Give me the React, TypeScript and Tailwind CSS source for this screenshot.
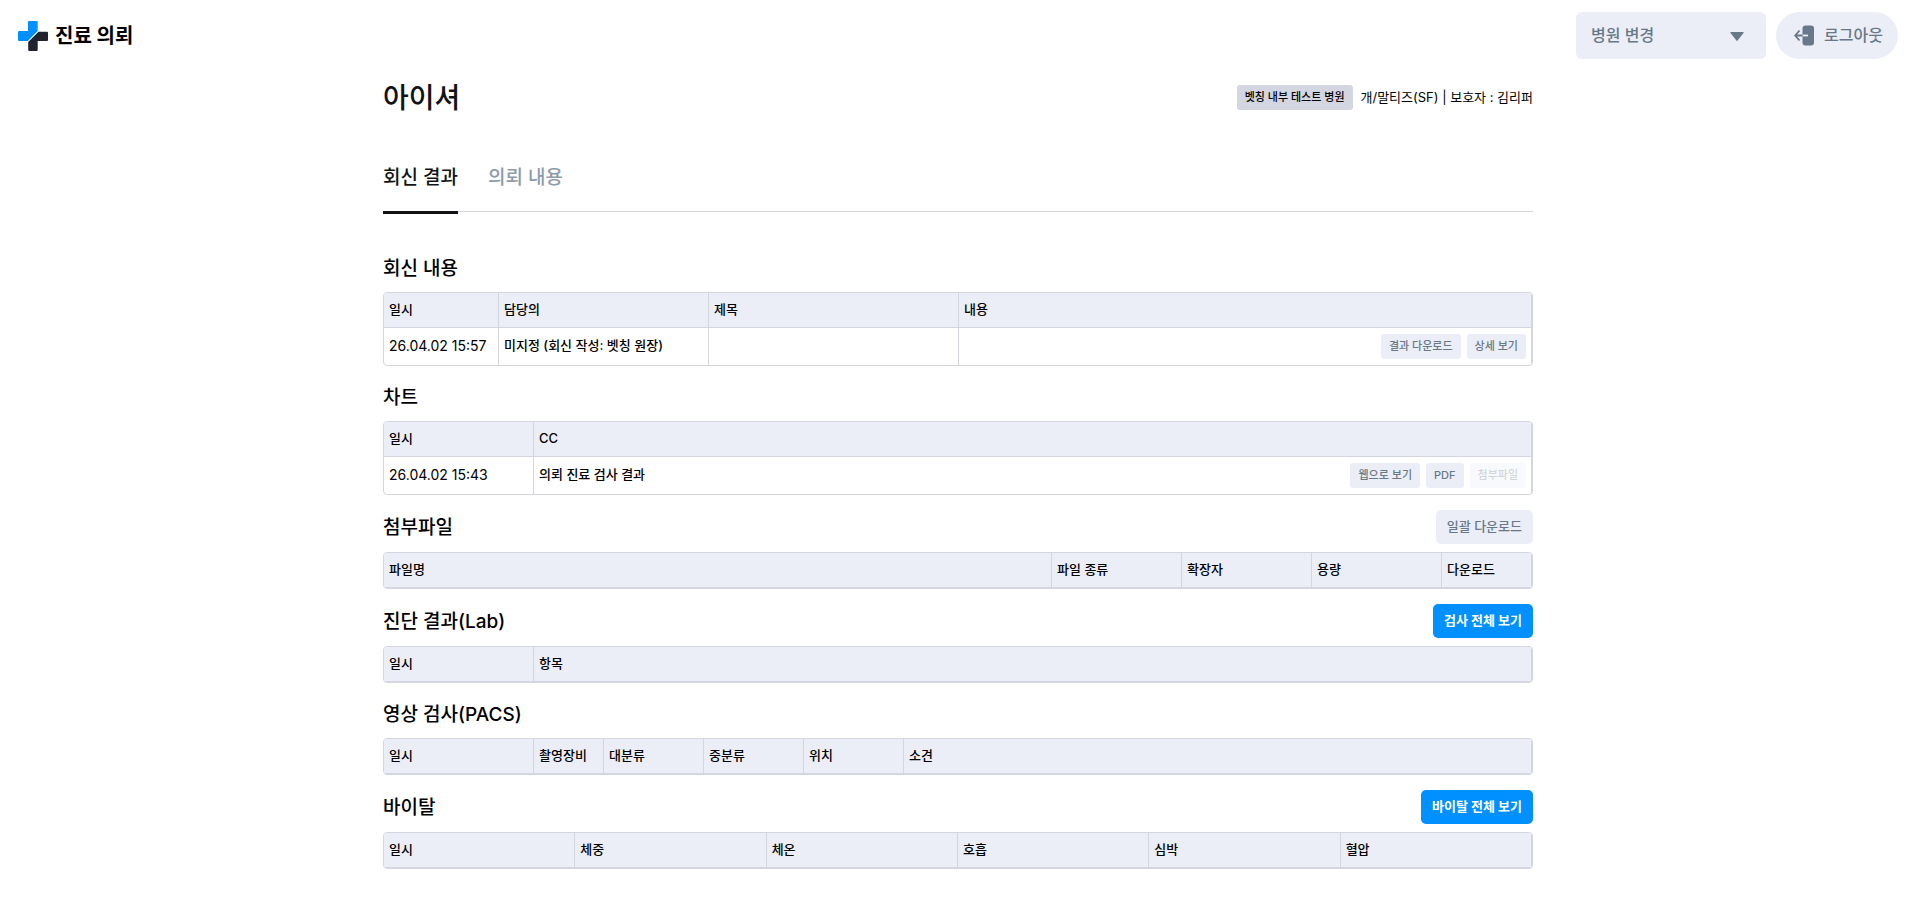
import type { ReactNode } from "react";
import clsx from "clsx";

interface Column {
  label: string;
  width?: string;
}

interface DataTableProps {
  label: string;
  columns: Column[];
  rows?: ReactNode[][];
}

interface SectionProps {
  title: string;
  action?: ReactNode;
  children: ReactNode;
}

const REPLY_COLUMNS: Column[] = [
  { label: "일시", width: "w-[115px]" },
  { label: "담당의", width: "w-[210px]" },
  { label: "제목", width: "w-[250px]" },
  { label: "내용" },
];

const CHART_COLUMNS: Column[] = [{ label: "일시", width: "w-[150px]" }, { label: "CC" }];

const FILE_COLUMNS: Column[] = [
  { label: "파일명" },
  { label: "파일 종류", width: "w-[130px]" },
  { label: "확장자", width: "w-[130px]" },
  { label: "용량", width: "w-[130px]" },
  { label: "다운로드", width: "w-[90px]" },
];

const LAB_COLUMNS: Column[] = [{ label: "일시", width: "w-[150px]" }, { label: "항목" }];

const PACS_COLUMNS: Column[] = [
  { label: "일시", width: "w-[150px]" },
  { label: "촬영장비", width: "w-[70px]" },
  { label: "대분류", width: "w-[100px]" },
  { label: "중분류", width: "w-[100px]" },
  { label: "위치", width: "w-[100px]" },
  { label: "소견" },
];

const VITAL_COLUMNS: Column[] = [
  { label: "일시" },
  { label: "체중" },
  { label: "체온" },
  { label: "호흡" },
  { label: "심박" },
  { label: "혈압" },
];

function Logo() {
  return (
    <svg viewBox="0 0 30 30" className="size-[30px]" aria-hidden="true">
      <path
        d="M11 0H18.700a1 1 0 0 1 1 1V10L9.700 20H1a1 1 0 0 1-1-1V11a1 1 0 0 1 1-1H10V1a1 1 0 0 1 1-1Z"
        fill="#0090ff"
      />
      <path
        d="M20.500 10.700H29a1 1 0 0 1 1 1V19a1 1 0 0 1-1 1H19.700V29a1 1 0 0 1-1 1H11.200a1 1 0 0 1-1-1V21Z"
        fill="#20232d"
      />
    </svg>
  );
}

function LogoutIcon() {
  return (
    <svg viewBox="0 0 20 21" className="h-[21px] w-5" aria-hidden="true">
      <rect x="8.500" y="0.500" width="11.500" height="20" rx="3" fill="#677889" />
      <path d="M5.500 5.500 1.200 10.500l4.300 5M1.500 10.500H9" fill="none" stroke="#677889" strokeWidth="1.800" />
      <path d="M8.500 10.500h5.500" stroke="#ebeef6" strokeWidth="1.800" />
    </svg>
  );
}

function SmallButton({ children, disabled }: { children: ReactNode; disabled?: boolean }) {
  return (
    <button
      type="button"
      disabled={disabled}
      className="h-[25px] rounded-[3px] bg-[#ebeef6] px-2 text-[11px] font-medium text-[#677889] disabled:opacity-30"
    >
      {children}
    </button>
  );
}

function ActionButton({ children, primary }: { children: ReactNode; primary?: boolean }) {
  return (
    <button
      type="button"
      className={clsx(
        "h-[34px] rounded-[5px] px-[11px] text-[13px]",
        primary ? "bg-[#0090ff] font-bold text-white" : "bg-[#ebeef6] font-medium text-[#677889]",
      )}
    >
      {children}
    </button>
  );
}

function CellText({ children }: { children: ReactNode }) {
  return <span className="block pb-0.5">{children}</span>;
}

function DataTable({ label, columns, rows = [] }: DataTableProps) {
  return (
    <div className="overflow-hidden rounded border border-[#d3d5e1]">
      <table aria-label={label} className="w-full table-fixed border-separate border-spacing-0 text-[13px] font-medium">
        <thead>
          <tr>
            {columns.map((column) => (
              <th
                key={column.label}
                scope="col"
                className={clsx(
                  "h-[35px] border-r border-b border-[#d3d5e1] bg-[#ebeef6] px-[5px] py-0 text-left font-medium",
                  column.width,
                )}
              >
                {column.label}
              </th>
            ))}
          </tr>
        </thead>
        {rows.length > 0 && (
          <tbody>
            {rows.map((cells, i) => (
              <tr key={i}>
                {cells.map((cell, j) => (
                  <td key={j} className="h-[37px] border-r border-[#d3d5e1] px-[5px] py-0">
                    {cell}
                  </td>
                ))}
              </tr>
            ))}
          </tbody>
        )}
      </table>
    </div>
  );
}

function Section({ title, action, children }: SectionProps) {
  return (
    <section className="flex flex-col gap-2">
      <div className="flex items-center justify-between">
        <h2 className="pt-0.5 text-[19px] leading-[30px] font-medium">{title}</h2>
        {action}
      </div>
      {children}
    </section>
  );
}

function AppHeader() {
  return (
    <header className="flex items-center justify-between py-3 pr-[19px] pl-[18px]">
      <a href="#" className="flex items-center gap-[7px] text-xl font-bold">
        <Logo />
        진료 의뢰
      </a>
      <div className="flex items-center gap-[10px] text-base font-medium text-[#677889]">
        <div className="relative">
          <select
            aria-label="병원 변경"
            className="h-[47px] w-[190px] appearance-none rounded-md bg-[#ebeef6] pr-10 pb-0.5 pl-[15px]"
          >
            <option>병원 변경</option>
          </select>
          <svg
            viewBox="0 0 14 9"
            className="pointer-events-none absolute top-5 right-[22px] h-[9px] w-[14px]"
            aria-hidden="true"
          >
            <path d="M1 0h12a.6.6 0 0 1 .5 1L7.600 8.600a.8.8 0 0 1-1.200 0L.5 1A.6.6 0 0 1 1 0Z" fill="#677889" />
          </svg>
        </div>
        <button type="button" className="flex h-[47px] w-[122px] items-center gap-[10px] rounded-full bg-[#ebeef6] pl-[18px]">
          <LogoutIcon />
          <span className="pb-0.5">로그아웃</span>
        </button>
      </div>
    </header>
  );
}

export default function App() {
  return (
    <div className="bg-white font-['Inter','Noto_Sans_CJK_KR',sans-serif] text-black">
      <AppHeader />
      <main className="mx-auto max-w-[1151px] pr-px pb-8">
        <div className="flex h-[53px] items-center justify-between">
          <h1 className="text-[28px] leading-10 font-medium text-[#111315]">아이셔</h1>
          <div className="flex items-center gap-2">
            <span className="rounded-[3px] bg-[#d3d5e1] px-2 text-[11px] leading-[25px] font-medium">
              벳칭 내부 테스트 병원
            </span>
            <span className="text-[13px]">개/말티즈(SF) | 보호자 : 김리퍼</span>
          </div>
        </div>

        <div role="tablist" className="mt-5 flex h-[68px] gap-[30px] border-b border-[#d3d5e1] text-[19px] font-medium">
          <button
            type="button"
            role="tab"
            aria-selected="true"
            className="-mb-[3px] border-b-3 border-[#111315] pt-0.5 text-[#111315]"
          >
            회신 결과
          </button>
          <button type="button" role="tab" aria-selected="false" className="pt-0.5 text-[#8d9baa]">
            의뢰 내용
          </button>
        </div>

        <div className="mt-10 flex flex-col gap-[15px]">
          <Section title="회신 내용">
            <DataTable
              label="회신 내용"
              columns={REPLY_COLUMNS}
              rows={[
                [
                  <span className="block pb-0.5 text-sm font-normal">26.04.02 15:57</span>,
                  <CellText>미지정 (회신 작성: 벳칭 원장)</CellText>,
                  "",
                  <div className="flex justify-end gap-[6px]">
                    <SmallButton>결과 다운로드</SmallButton>
                    <SmallButton>상세 보기</SmallButton>
                  </div>,
                ],
              ]}
            />
          </Section>

          <Section title="차트">
            <DataTable
              label="차트"
              columns={CHART_COLUMNS}
              rows={[
                [
                  <span className="block pb-0.5 text-sm font-normal">26.04.02 15:43</span>,
                  <div className="flex items-center justify-between">
                    <CellText>의뢰 진료 검사 결과</CellText>
                    <div className="flex gap-[6px]">
                      <SmallButton>웹으로 보기</SmallButton>
                      <SmallButton>PDF</SmallButton>
                      <SmallButton disabled>첨부파일</SmallButton>
                    </div>
                  </div>,
                ],
              ]}
            />
          </Section>

          <Section title="첨부파일" action={<ActionButton>일괄 다운로드</ActionButton>}>
            <DataTable label="첨부파일" columns={FILE_COLUMNS} />
          </Section>

          <Section title="진단 결과(Lab)" action={<ActionButton primary>검사 전체 보기</ActionButton>}>
            <DataTable label="진단 결과(Lab)" columns={LAB_COLUMNS} />
          </Section>

          <Section title="영상 검사(PACS)">
            <DataTable label="영상 검사(PACS)" columns={PACS_COLUMNS} />
          </Section>

          <Section title="바이탈" action={<ActionButton primary>바이탈 전체 보기</ActionButton>}>
            <DataTable label="바이탈" columns={VITAL_COLUMNS} />
          </Section>
        </div>
      </main>
    </div>
  );
}
